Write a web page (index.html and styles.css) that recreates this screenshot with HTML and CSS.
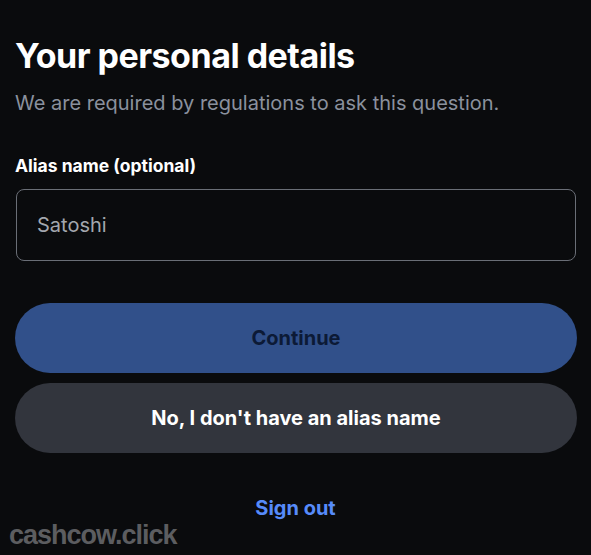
FILE: index.html
```html
<!DOCTYPE html>
<html lang="en">
<head>
<meta charset="utf-8">
<title>Your personal details</title>
<link rel="stylesheet" href="styles.css">
</head>
<body>
<main class="page">
  <h1 class="title">Your personal details</h1>
  <p class="subtitle">We are required by regulations to ask this question.</p>
  <label class="label" for="alias">Alias name (optional)</label>
  <input class="input" id="alias" type="text" placeholder="Satoshi">
  <div class="actions">
    <button class="btn btn-primary" type="button">Continue</button>
    <button class="btn btn-secondary" type="button">No, I don't have an alias name</button>
  </div>
  <a class="signout" href="#">Sign out</a>
</main>
<div class="watermark">cashcow.click</div>
</body>
</html>
```

FILE: styles.css
```css
html, body {
  margin: 0;
  padding: 0;
  background: #0a0b0d;
  height: 100%;
}
body {
  font-family: Inter, "Noto Sans", sans-serif;
  color: #ffffff;
  position: relative;
  overflow: hidden;
}
.page {
  display: flex;
  flex-direction: column;
  padding: 36px 15px 0 15px;
}
.title {
  margin: 0;
  font-size: 34px;
  line-height: 40px;
  font-weight: 700;
  letter-spacing: -0.5px;
}
.subtitle {
  margin: 13px 0 0;
  font-size: 20px;
  line-height: 28px;
  color: #8a919e;
}
.label {
  margin-top: 37px;
  font-size: 17.5px;
  line-height: 24px;
  font-weight: 700;
}
.input {
  margin: 11px 0 0 1px;
  box-sizing: border-box;
  height: 72px;
  border: 1px solid #6a6e76;
  border-radius: 8px;
  background: #0a0b0d;
  padding: 0 20px;
  font-family: inherit;
  font-size: 20px;
  color: #fff;
  outline: none;
}
.input::placeholder {
  color: #a3a7ae;
}
.actions {
  margin-top: 42px;
  display: flex;
  flex-direction: column;
  gap: 10px;
  margin-right: -1px;
}
.btn {
  height: 70px;
  border: none;
  border-radius: 35px;
  font-family: inherit;
  font-size: 20px;
  font-weight: 700;
  cursor: pointer;
}
.btn-primary {
  background: #31508a;
  color: #0c1a36;
}
.btn-secondary {
  background: #32353d;
  color: #ffffff;
}
.signout {
  align-self: center;
  margin-top: 43px;
  font-size: 20px;
  line-height: 24px;
  font-weight: 700;
  color: #578bfa;
  text-decoration: none;
}
.watermark {
  position: absolute;
  left: 9px;
  bottom: 4px;
  font-family: "Liberation Sans", Arial, sans-serif;
  font-weight: 700;
  font-size: 27px;
  letter-spacing: -1px;
  color: #5c5d60;
}
```
